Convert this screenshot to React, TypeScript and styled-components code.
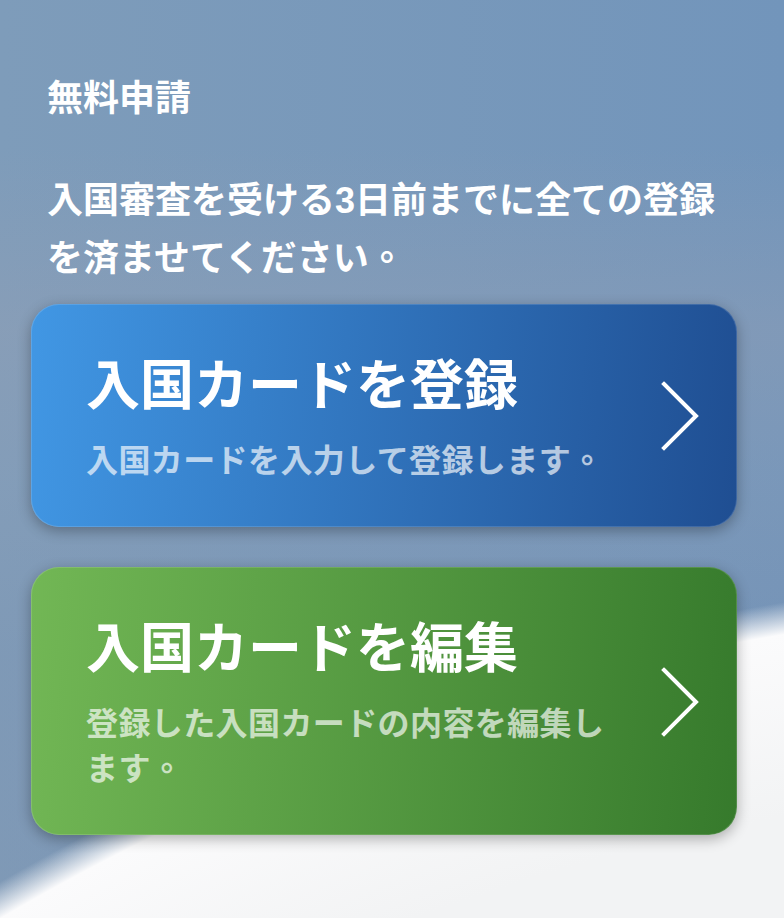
import React from "react";
import styled, { createGlobalStyle } from "styled-components";

const GlobalStyle = createGlobalStyle`
  html, body {
    margin: 0;
    padding: 0;
  }

  body {
    font-family: "Liberation Sans", "Noto Sans CJK JP", sans-serif;
    background: #7b98b9;
  }
`;

const Page = styled.main`
  box-sizing: border-box;
  width: 100%;
  height: 918px;
  overflow: hidden;
  padding: 70px 47px 0 31px;
  display: flex;
  flex-direction: column;
  background:
    radial-gradient(
      circle at 1156px 2884px,
      #f2f3f4 2100px,
      #fbfbfc 2280px,
      rgba(251, 251, 252, 0) 2312px
    ),
    linear-gradient(
      180deg,
      rgba(150, 160, 180, 0) 16%,
      rgba(150, 160, 180, 0.4) 36%,
      rgba(150, 160, 180, 0.22) 52%,
      rgba(130, 140, 165, 0.18) 72%,
      rgba(130, 140, 165, 0.18) 100%
    ),
    linear-gradient(90deg, #7e9cba, #7295bb);
`;

const Intro = styled.div`
  padding-left: 16px;
  color: #fff;
  font-size: 36px;
  line-height: 58px;
  font-weight: 700;
`;

const Heading = styled.h1`
  margin: 0 0 44px;
  font: inherit;
`;

const Notice = styled.p`
  margin: 0;
  font: inherit;
`;

// the reference's full stop sits in the middle of its cell
const Period = styled.span`
  display: inline-block;
  width: 1em;
  height: 1em;
  line-height: 1em;
  font-family: "Noto Sans CJK TC", sans-serif;
`;

const CardList = styled.div`
  display: flex;
  flex-direction: column;
  gap: 40px;
  margin-top: 16px;
`;

const Card = styled.a<{ $from: string; $to: string }>`
  box-sizing: border-box;
  display: flex;
  align-items: center;
  justify-content: space-between;
  padding: 43px 36px 42px 54px;
  border-radius: 28px;
  border: 1px solid rgba(255, 255, 255, 0.14);
  background: linear-gradient(95deg, ${(p) => p.$from}, ${(p) => p.$to}) border-box;
  box-shadow: 0 4px 14px rgba(0, 0, 0, 0.3);
  color: #fff;
`;

const CardText = styled.div`
  width: 530px;
`;

const CardTitle = styled.div`
  font-size: 54px;
  line-height: 76px;
  font-weight: 700;
  margin-bottom: 15px;
`;

const CardDescription = styled.div`
  font-size: 32px;
  line-height: 45px;
  letter-spacing: 0.4px;
  font-weight: 700;
  opacity: 0.66;
`;

const Chevron = styled.svg`
  flex: none;
  width: 40px;
  height: 72px;
  fill: none;
  stroke: #fff;
  stroke-width: 4;
  stroke-linecap: square;
  stroke-linejoin: miter;
`;

const ChevronIcon = () => (
  <Chevron viewBox="0 0 40 72">
    <path d="M4 4 L36 36 L4 68" />
  </Chevron>
);

export default function App() {
  return (
    <>
      <GlobalStyle />
      <Page>
        <Intro>
          <Heading>無料申請</Heading>
          <Notice>
            入国審査を受ける3日前までに全ての登録
            <br />
            を済ませてください<Period>。</Period>
          </Notice>
        </Intro>
        <CardList>
          <Card $from="#4197e4" $to="#1f4e92">
            <CardText>
              <CardTitle>入国カードを登録</CardTitle>
              <CardDescription>
                入国カードを入力して登録します<Period>。</Period>
              </CardDescription>
            </CardText>
            <ChevronIcon />
          </Card>
          <Card $from="#72b755" $to="#367a2c">
            <CardText>
              <CardTitle>入国カードを編集</CardTitle>
              <CardDescription>
                登録した入国カードの内容を編集し
                <br />
                ます<Period>。</Period>
              </CardDescription>
            </CardText>
            <ChevronIcon />
          </Card>
        </CardList>
      </Page>
    </>
  );
}
